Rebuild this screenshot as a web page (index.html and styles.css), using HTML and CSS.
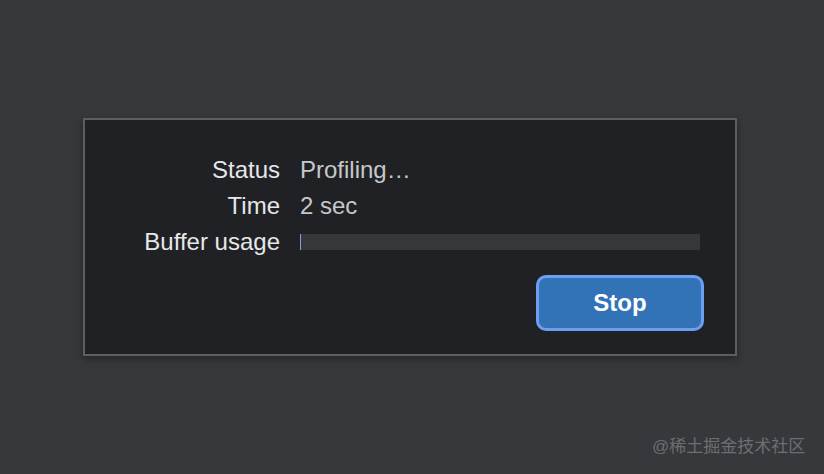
FILE: index.html
```html
<!DOCTYPE html>
<html>
<head>
<meta charset="utf-8">
<link rel="stylesheet" href="styles.css">
</head>
<body>
<div class="page">
  <div class="panel">
    <div class="rows">
      <div class="label">Status</div><div class="value">Profiling…</div>
      <div class="label">Time</div><div class="value">2 sec</div>
      <div class="label">Buffer usage</div><div class="value"><div class="bar"><div class="fill"></div></div></div>
    </div>
    <div class="actions"><button class="stop">Stop</button></div>
  </div>
  <div class="watermark">@稀土掘金技术社区</div>
</div>
</body>
</html>
```
FILE: styles.css
```css
html, body { margin: 0; padding: 0; }
body { background: #37383c; width: 824px; height: 474px; overflow: hidden; font-family: "Liberation Sans", Arial, sans-serif; }
.page { position: relative; width: 824px; height: 474px; padding: 118px 0 0 83px; box-sizing: border-box; }
.panel { width: 654px; height: 238px; box-sizing: border-box; border: 2px solid #5d5e62; background: #202124; box-shadow: 0 3px 8px rgba(0,0,0,0.35); padding: 32px 31px 0 0; }
.rows { display: grid; grid-template-columns: 195px 400px; column-gap: 20px; grid-auto-rows: 36px; align-items: center; font-size: 24px; }
.label { text-align: right; color: #e6e7e9; }
.value { color: #c7c8cb; }
.bar { height: 16px; background: #36373b; position: relative; }
.fill { width: 1px; height: 16px; background: #7aa3e0; }
.actions { display: flex; justify-content: flex-end; margin-top: 15px; }
.stop { width: 168px; height: 56px; box-sizing: border-box; border: 3px solid #6e9ef0; border-radius: 10px; background: #3273b8; color: #ffffff; font-family: "Liberation Sans", Arial, sans-serif; font-weight: bold; font-size: 24px; padding: 0; }
.watermark { position: absolute; left: 652px; top: 432px; font-size: 17px; color: #6d6e72; font-family: "Liberation Sans", "Noto Sans CJK SC", sans-serif; }
```
